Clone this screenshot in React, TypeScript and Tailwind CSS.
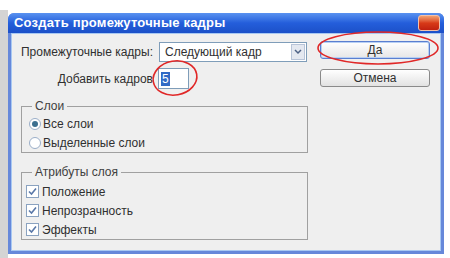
import React from "react";

const font = { fontFamily: '"Liberation Sans", Arial, sans-serif' };

function Check() {
  return (
    <div className="w-[13px] h-[13px] border border-[#8aa2c0] bg-white flex items-center justify-center">
      <svg width="9" height="9" viewBox="0 0 9 9">
        <path d="M1 4.5 L3.5 7 L8 1.5" fill="none" stroke="#5a78a8" strokeWidth="1.6" />
      </svg>
    </div>
  );
}

function Radio({ on }: { on?: boolean }) {
  return (
    <div className="w-[12px] h-[12px] rounded-full border border-[#9aaec8] bg-white flex items-center justify-center">
      {on && <div className="w-[6px] h-[6px] rounded-full bg-[#3c6f8f]" />}
    </div>
  );
}

export default function App() {
  return (
    <div className="relative w-[450px] h-[258px] bg-white overflow-hidden text-[12px] text-[#303030]" style={font}>
      <div className="absolute left-0 top-[10px] w-[8px] h-[248px] bg-[#d4d4d4]" />
      <div className="flex pt-[13px] pl-[8px]">
        <div className="w-[436px] h-[241px] flex flex-col rounded-t-[6px] overflow-hidden bg-[#6688da]">
          {/* Title bar */}
          <div className="h-[20px] flex items-center justify-between pl-[6px] pr-[4px] bg-gradient-to-b from-[#5a92f0] via-[#245edb] to-[#1c50c8]">
            <span className="text-white font-bold text-[13px] tracking-[0.2px]">Создать промежуточные кадры</span>
            <div className="w-[22px] h-[16px] rounded-[3px] border border-[#f3c0a8] bg-gradient-to-b from-[#f0a070] via-[#d83a18] to-[#c02010]" />
          </div>
          {/* Body */}
          <div className="flex-1 mx-[3px] mb-[3px] border border-[#a8c8f2] bg-[#efefef] flex">
            <div className="w-[296px] flex flex-col pt-[8px]">
              <div className="flex items-center h-[20px]">
                <div className="w-[141px] text-right">Промежуточные кадры:</div>
                <div className="ml-[6px] w-[148px] h-[20px] border border-[#7f9db9] bg-white flex items-center">
                  <span className="pl-[5px] flex-1">Следующий кадр</span>
                  <div className="w-[14px] h-[16px] mr-[1px] border border-[#b8c4d8] bg-[#e4e8f0] flex items-center justify-center">
                    <svg width="8" height="6" viewBox="0 0 8 6">
                      <path d="M1 1 L4 4 L7 1" fill="none" stroke="#4d6185" strokeWidth="1.5" />
                    </svg>
                  </div>
                </div>
              </div>
              <div className="flex items-center h-[21px] mt-[6px]">
                <div className="w-[141px] text-right">Добавить кадров</div>
                <div className="ml-[5px] w-[31px] h-[21px] border border-[#7f9db9] bg-white flex items-center pl-[2px]">
                  <span className="bg-[#316ac5] text-white px-[1px] leading-[14px]">5</span>
                </div>
              </div>
              <fieldset className="ml-[9px] mt-[10px] w-[287px] border border-[#a0a0a0] pl-[7px]">
                <legend className="ml-[3px] px-[3px] leading-[14px] text-[#404040]">Слои</legend>
                <div className="flex flex-col pt-[1px]">
                  <div className="h-[19px] flex items-center gap-[2px]"><Radio on />Все слои</div>
                  <div className="h-[19px] flex items-center gap-[2px]"><Radio />Выделенные слои</div>
                </div>
              </fieldset>
              <fieldset className="ml-[9px] mt-[12px] w-[287px] border border-[#a0a0a0] pl-[4px]">
                <legend className="ml-[6px] px-[3px] leading-[14px] text-[#404040]">Атрибуты слоя</legend>
                <div className="flex flex-col pt-[3px]">
                  <div className="h-[19px] flex items-center gap-[3px]"><Check />Положение</div>
                  <div className="h-[19px] flex items-center gap-[3px]"><Check />Непрозрачность</div>
                  <div className="h-[19px] flex items-center gap-[3px]"><Check />Эффекты</div>
                </div>
              </fieldset>
            </div>
            <div className="ml-[12px] pt-[7px] flex flex-col gap-[10px]">
              <div className="w-[110px] h-[18px] rounded-[3px] border border-[#5a7fd0] bg-gradient-to-b from-[#ffffff] to-[#e6e6e6] shadow-[inset_0_0_0_1px_#b8d0f4] flex items-center justify-center">Да</div>
              <div className="w-[110px] h-[18px] rounded-[3px] border border-[#8a8a8a] bg-gradient-to-b from-[#ffffff] to-[#e2e2e2] flex items-center justify-center">Отмена</div>
            </div>
          </div>
        </div>
      </div>
      {/* Red hand-drawn annotations */}
      <svg className="absolute left-0 top-0 pointer-events-none" width="450" height="258">
        <ellipse cx="378" cy="48" rx="60" ry="16" fill="none" stroke="#e02828" strokeWidth="1.6" />
        <ellipse cx="175" cy="78" rx="22" ry="17" fill="none" stroke="#e02828" strokeWidth="1.6" transform="rotate(-10 175 78)" />
      </svg>
    </div>
  );
}
